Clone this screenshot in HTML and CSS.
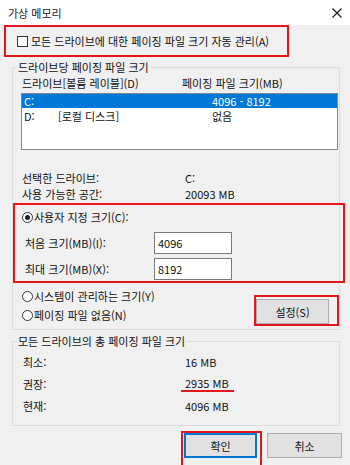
FILE: index.html
```html
<!DOCTYPE html>
<html lang="ko">
<head>
    <meta charset="UTF-8">
    <meta name="viewport" content="width=device-width, initial-scale=1.0">
    <title>가상 메모리</title>
    <link rel="stylesheet" href="styles.css">
</head>
<body>
    <div class="titlebar">
        <span class="title">가상 메모리</span>
        <svg class="close" width="10" height="10" viewBox="0 0 10 10">
            <path d="M0.5 0.5 L9.5 9.5 M9.5 0.5 L0.5 9.5" stroke="#111" stroke-width="1.1" fill="none"/>
        </svg>
    </div>

    <div class="auto-manage mark">
        <span class="checkbox"></span>
        <span>모든 드라이브에 대한 페이징 파일 크기 자동 관리(A)</span>
    </div>

    <fieldset class="group drive-group">
        <legend>드라이브당 페이징 파일 크기</legend>
        <div class="list-head">
            <span class="head-drive">드라이브[볼륨 레이블](D)</span>
            <span>페이징 파일 크기(MB)</span>
        </div>
        <div class="listbox">
            <div class="list-row selected">
                <span class="col-letter">C:</span>
                <span class="col-label"></span>
                <span>4096 - 8192</span>
            </div>
            <div class="list-row">
                <span class="col-letter">D:</span>
                <span class="col-label">[로컬 디스크]</span>
                <span>없음</span>
            </div>
        </div>

        <div class="info">
            <div class="info-row"><span class="info-label">선택한 드라이브:</span><span>C:</span></div>
            <div class="info-row"><span class="info-label">사용 가능한 공간:</span><span>20093 MB</span></div>
        </div>

        <div class="custom-size mark">
            <div class="radio-row"><span class="radio checked"></span>사용자 지정 크기(C):</div>
            <div class="size-row">
                <span class="size-label">처음 크기(MB)(I):</span>
                <input class="textbox" type="text" value="4096">
            </div>
            <div class="size-row">
                <span class="size-label">최대 크기(MB)(X):</span>
                <input class="textbox" type="text" value="8192">
            </div>
        </div>

        <div class="options">
            <div class="radio-list">
                <div class="radio-row"><span class="radio"></span>시스템이 관리하는 크기(Y)</div>
                <div class="radio-row"><span class="radio"></span>페이징 파일 없음(N)</div>
            </div>
            <div class="set-mark mark">
                <button class="btn set-btn">설정(S)</button>
            </div>
        </div>
    </fieldset>

    <fieldset class="group total-group">
        <legend>모든 드라이브의 총 페이징 파일 크기</legend>
        <div class="total-row"><span class="total-label">최소:</span><span>16 MB</span></div>
        <div class="total-row"><span class="total-label">권장:</span><span class="underlined">2935 MB</span></div>
        <div class="total-row"><span class="total-label">현재:</span><span>4096 MB</span></div>
    </fieldset>

    <div class="actions">
        <div class="ok-mark mark">
            <button class="btn ok-btn">확인</button>
        </div>
        <button class="btn cancel-btn">취소</button>
    </div>
</body>
</html>
```

FILE: styles.css
```css
* {
    box-sizing: border-box;
}

body {
    margin: 0;
    width: 350px;
    height: 465px;
    overflow: hidden;
    background: #f0f0f0;
    font-family: "Noto Sans CJK KR", "Noto Sans", sans-serif;
    font-size: 11px;
    line-height: 14px;
    color: #111;
}

.titlebar {
    height: 25px;
    background: white;
    display: flex;
    justify-content: space-between;
    align-items: center;
    padding: 0 8px;
}

.title {
    font-size: 11px;
    color: #222;
}

.mark {
    border: 2px solid #e3161d;
}

.auto-manage {
    margin-left: 4px;
    width: 285px;
    height: 32px;
    padding-left: 11px;
    display: flex;
    align-items: center;
}

.checkbox {
    width: 11px;
    height: 11px;
    border: 1px solid #333;
    background: white;
    margin-right: 3px;
}

.group {
    margin: 0 0 0 12px;
    width: 328px;
    border: 1px solid #dcdcdc;
    padding: 0 3px 3px 8px;
    min-width: 0;
}

.group legend {
    padding: 0 1px;
    margin-left: -4px;
    line-height: 14px;
}

.drive-group {
    margin-top: 3px;
}

.list-head {
    display: flex;
    margin-top: 2px;
    padding-left: 1px;
}

.head-drive {
    width: 160px;
}

.listbox {
    margin-top: 3px;
    width: 317px;
    height: 57px;
    background: white;
    border: 1px solid #828790;
}

.list-row {
    display: flex;
    align-items: center;
    height: 15px;
    line-height: 13px;
    padding-left: 2px;
}

.list-row.selected {
    background: #0078d7;
    color: white;
    height: 14px;
    margin-bottom: 1px;
}

.col-letter {
    width: 34px;
}

.col-label {
    width: 154px;
}

.info {
    margin-top: 20px;
    padding-left: 1px;
}

.info-row {
    display: flex;
    line-height: 16px;
}

.info-label {
    width: 163px;
}

.custom-size {
    margin: 1px -3px 0 -8px;
    width: 332px;
    height: 80px;
    padding: 5px 0 0 7px;
}

.radio-row {
    display: flex;
    align-items: center;
    height: 14px;
}

.radio {
    width: 11px;
    height: 11px;
    border: 1px solid #333;
    border-radius: 50%;
    background: white;
    margin-right: 1px;
    display: flex;
    align-items: center;
    justify-content: center;
}

.radio.checked::after {
    content: "";
    width: 5px;
    height: 5px;
    border-radius: 50%;
    background: #222;
}

.size-row {
    display: flex;
    align-items: center;
    margin-top: 4px;
}

.custom-size .radio-row + .size-row {
    margin-top: 8px;
}

.size-label {
    width: 132px;
    padding-left: 3px;
}

.textbox {
    width: 78px;
    height: 22px;
    border: 1px solid #7a7a7a;
    background: white;
    font: inherit;
    color: #111;
    padding: 0 3px;
    margin: 0;
    outline: none;
}

.options {
    display: flex;
    justify-content: space-between;
    margin-right: -3px;
}

.radio-list {
    padding: 6px 0 0 1px;
    display: flex;
    flex-direction: column;
    gap: 5px;
}

.set-mark {
    margin-top: 12px;
    padding: 2px 8px 0 0;
    width: 85px;
    height: 31px;
}

.btn {
    font: inherit;
    color: #111;
    background: #e1e1e1;
    border: 1px solid #adadad;
    height: 25px;
    padding: 0;
    margin: 0;
}

.set-btn {
    width: 73px;
}

.total-group {
    margin-top: 4px;
    padding-bottom: 8px;
}

.total-row {
    display: flex;
    align-items: center;
    height: 22px;
    padding-left: 2px;
}

.total-row:first-of-type {
    margin-top: 3px;
}

.total-label {
    width: 162px;
}

.underlined {
    display: inline-block;
    line-height: 14px;
    padding: 0 5px 0 4px;
    margin-left: -4px;
    border-bottom: 2px solid #e3161d;
}

.actions {
    display: flex;
    justify-content: flex-end;
    align-items: flex-start;
    gap: 5px;
    margin-top: 5px;
    padding-right: 8px;
}

.ok-mark {
    padding: 0 3px 8px 1px;
}

.ok-btn {
    width: 73px;
    border: 2px solid #0078d7;
}

.cancel-btn {
    width: 75px;
    margin-top: 2px;
}
```
